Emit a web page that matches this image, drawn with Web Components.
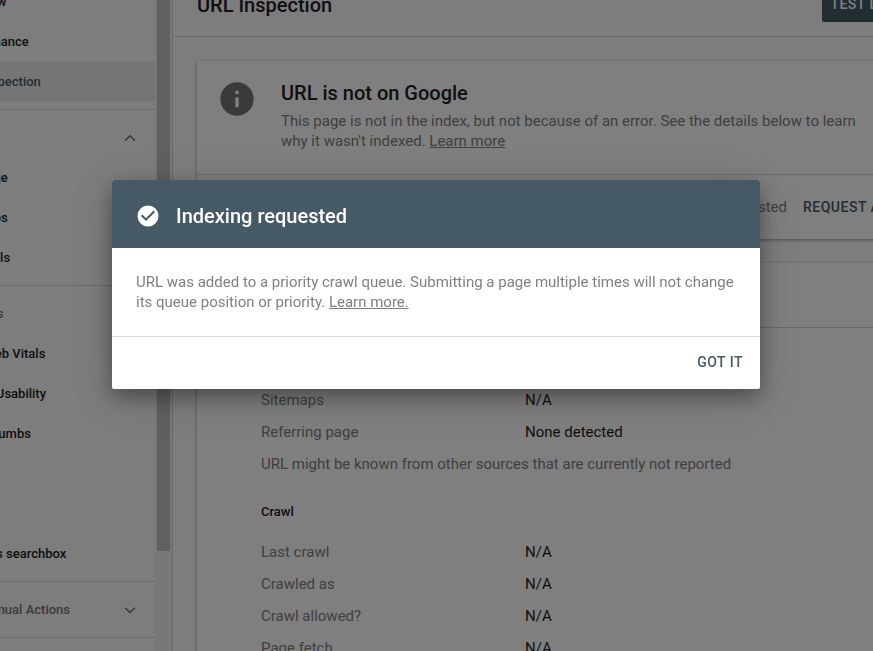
<!DOCTYPE html>
<html lang="en">
<head>
<meta charset="utf-8">
<title>URL Inspection</title>
<style>
  body { margin: 0; font-family: Roboto, "Liberation Sans", sans-serif; font-size: 15px; line-height: 20px; color: #212121; }
</style>
</head>
<body>
<console-shell>
  <side-nav slot="nav">
    <nav-section>
      <nav-item>Overview</nav-item>
      <nav-item>Performance</nav-item>
      <nav-item current>URL Inspection</nav-item>
    </nav-section>
    <nav-section heading="Index" icon="up">
      <nav-item>Coverage</nav-item>
      <nav-item>Sitemaps</nav-item>
      <nav-item>Removals</nav-item>
    </nav-section>
    <nav-section heading="Enhancements">
      <nav-item>Core Web Vitals</nav-item>
      <nav-item>Mobile Usability</nav-item>
      <nav-item>Breadcrumbs</nav-item>
      <nav-item>FAQ</nav-item>
      <nav-item>Logos</nav-item>
      <nav-item>Sitelinks searchbox</nav-item>
    </nav-section>
    <nav-section heading="Security &amp; Manual Actions" icon="down"></nav-section>
    <nav-section></nav-section>
  </side-nav>
  <page-header heading="URL Inspection" action="TEST LIVE URL"></page-header>
  <status-card heading="URL is not on Google" note="Indexing requested" action="REQUEST AGAIN">
    This page is not in the index, but not because of an error. See the details below to learn why it wasn't indexed. <text-link>Learn more</text-link>
  </status-card>
  <detail-card>
    <detail-group heading="Discovery">
      <detail-row label="Sitemaps">N/A</detail-row>
      <detail-row label="Referring page">None detected</detail-row>
      <detail-row label="URL might be known from other sources that are currently not reported"></detail-row>
    </detail-group>
    <detail-group heading="Crawl">
      <detail-row label="Last crawl">N/A</detail-row>
      <detail-row label="Crawled as">N/A</detail-row>
      <detail-row label="Crawl allowed?">N/A</detail-row>
      <detail-row label="Page fetch">N/A</detail-row>
      <detail-row label="Indexing allowed?">N/A</detail-row>
    </detail-group>
  </detail-card>
</console-shell>
<modal-dialog heading="Indexing requested" action="GOT IT">
  URL was added to a priority crawl queue. Submitting a page multiple times will not change its queue position or priority. <text-link>Learn more.</text-link>
</modal-dialog>

<script>
const define = (name, render) => customElements.define(name, class extends HTMLElement {
  connectedCallback() {
    if (this.shadowRoot) return;
    this.attachShadow({ mode: "open" }).innerHTML = render(this);
  }
});
const attr = (el, name) => (el.getAttribute(name) || "").replace(/&/g, "&amp;").replace(/</g, "&lt;");

define("console-shell", () => `
  <style>
    :host { display: grid; grid-template-columns: auto 1fr; height: 100vh; overflow: hidden; background: #fafafa; }
    main { border-left: 1px solid #d6d6d6; min-width: 0; overflow: hidden; }
    .content { margin-right: -90px; }
  </style>
  <slot name="nav"></slot>
  <main><div class="content"><slot></slot></div></main>`);

/* Navigation scrolled partly out of view, with its scrollbar beside it */
define("side-nav", () => `
  <style>
    :host { display: flex; width: 172px; height: 100vh; overflow: hidden; }
    nav { flex: none; width: 262px; margin: -26px 0 0 -107px; }
    .track { flex: 1; background: #f1f1f1; padding: 0 2px; }
    .thumb { height: 551px; background: #c1c1c1; }
  </style>
  <nav><slot></slot></nav>
  <div class="track"><div class="thumb"></div></div>`);

define("nav-section", el => `
  <style>
    :host { display: block; padding: 8px 0 7px; border-bottom: 1px solid #d4d4d4; }
    button { all: unset; box-sizing: border-box; display: flex; align-items: center; justify-content: space-between; width: 100%; height: 40px; padding: 0 16px 0 24px; font-size: 13px; font-weight: 500; color: #757575; }
    svg { width: 18px; height: 18px; fill: none; stroke: #757575; stroke-width: 2; }
  </style>
  ${el.hasAttribute("heading") ? `<button type="button"><span>${attr(el, "heading")}</span>${
    el.hasAttribute("icon") ? `<svg viewBox="0 0 24 24"><path d="${attr(el, "icon") === "up" ? "M5.500 15.500 12 9l6.500 6.500" : "M5.500 9 12 15.500 18.500 9"}"/></svg>` : ""}</button>` : ""}
  <slot></slot>`);

define("nav-item", () => `
  <style>
    :host { display: block; font-size: 13px; font-weight: 500; }
    :host([current]) { background: #ebebeb; color: #455a64; }
    a { display: flex; align-items: center; height: 40px; padding-left: 60px; color: inherit; text-decoration: none; }
  </style>
  <a href="#"><slot></slot></a>`);

define("text-link", () => `
  <style>:host { display: inline; } a { color: inherit; text-decoration: underline; }</style>
  <a href="#"><slot></slot></a>`);

define("page-header", el => `
  <style>
    :host { display: flex; justify-content: space-between; align-items: center; height: 64px; margin-top: -28px; padding: 0 24px; border-bottom: 1px solid #d6d6d6; }
    h1 { margin: 0; padding-top: 2px; font-size: 20px; font-weight: 500; line-height: 24px; }
    button { box-sizing: border-box; height: 36px; margin: 0; padding: 0 8px; border: 0; border-radius: 2px; background: #455a64; color: #fff; font: 500 14px/20px Roboto, sans-serif; letter-spacing: 0.5px; white-space: nowrap; }
  </style>
  <h1>${attr(el, "heading")}</h1><button type="button">${attr(el, "action")}</button>`);

define("status-card", el => `
  <style>
    :host { display: block; margin: 24px; background: #fff; box-shadow: 0 1px 3px rgba(0,0,0,.4); }
    .top { display: flex; gap: 24px; padding: 18px 20px 23px; border-bottom: 1px solid #d6d6d6; }
    svg { flex: none; width: 40px; height: 40px; fill: #757575; }
    h2 { margin: 2px 0 6px; font-size: 20px; font-weight: 500; line-height: 24px; }
    p { margin: 0; max-width: 600px; color: #808080; }
    .foot { display: flex; justify-content: flex-end; align-items: center; gap: 16px; height: 64px; padding-right: 24px; color: #808080; }
    button { margin: 0; padding: 0; border: 0; background: none; color: #455a64; font: 500 14px/20px Roboto, sans-serif; letter-spacing: 0.5px; }
  </style>
  <div class="top">
    <svg viewBox="0 0 24 24"><path d="M12 2a10 10 0 1 0 0 20 10 10 0 0 0 0-20zm1 15h-2v-6h2zm0-8h-2V7h2z"/></svg>
    <div><h2>${attr(el, "heading")}</h2><p><slot></slot></p></div>
  </div>
  <div class="foot"><span>${attr(el, "note")}</span><button type="button">${attr(el, "action")}</button></div>`);

define("detail-card", () => `
  <style>
    :host { display: block; margin: 24px; background: #fff; box-shadow: 0 1px 3px rgba(0,0,0,.4); }
    header { height: 64px; border-bottom: 1px solid #d6d6d6; }
    .groups { padding: 0 64px; }
  </style>
  <header></header><div class="groups"><slot></slot></div>`);

define("detail-group", el => `
  <style>
    :host { display: block; }
    h3 { margin: 0; padding: 22px 0 14px; font-size: 13px; font-weight: 500; line-height: 20px; }
  </style>
  <h3>${attr(el, "heading")}</h3><slot></slot>`);

define("detail-row", el => `
  <style>
    :host { display: block; }
    dl { display: flex; align-items: center; height: 32px; margin: 0; }
    dt { min-width: 264px; color: #808080; }
    dd { margin: 0; }
  </style>
  <dl><dt>${attr(el, "label")}</dt><dd><slot></slot></dd></dl>`);

define("modal-dialog", el => `
  <style>
    :host { position: fixed; inset: 0; padding: 180px 113px 0 112px; background: rgba(0,0,0,.5); }
    section { background: #fff; border-radius: 2px; overflow: hidden; box-shadow: 0 9px 46px 8px rgba(0,0,0,.1), 0 8px 20px rgba(0,0,0,.35); }
    header { display: flex; align-items: center; gap: 16px; height: 68px; padding: 4px 24px 0; box-sizing: border-box; background: #455a64; color: #fff; }
    svg { width: 24px; height: 24px; fill: #fff; }
    h2 { margin: 0; font-size: 20px; font-weight: 500; line-height: 24px; }
    p { margin: 0; padding: 24px; color: #808080; }
    footer { display: flex; justify-content: flex-end; align-items: center; height: 50px; padding: 0 8px 2px; border-top: 1px solid #dcdcdc; }
    button { height: 36px; margin: 0; padding: 0 9px; border: 0; background: none; color: #455a64; font: 500 14px/20px Roboto, sans-serif; letter-spacing: 0.5px; }
  </style>
  <section role="dialog" aria-modal="true" aria-labelledby="title">
    <header>
      <svg viewBox="0 0 24 24"><path d="M12 1.500a10.500 10.500 0 1 0 0 21 10.500 10.500 0 0 0 0-21zm-2 15.500-5-5 1.400-1.400 3.600 3.600 7.600-7.600L19 8z"/></svg>
      <h2 id="title">${attr(el, "heading")}</h2>
    </header>
    <p><slot></slot></p>
    <footer><button type="button">${attr(el, "action")}</button></footer>
  </section>`);
</script>
</body>
</html>
